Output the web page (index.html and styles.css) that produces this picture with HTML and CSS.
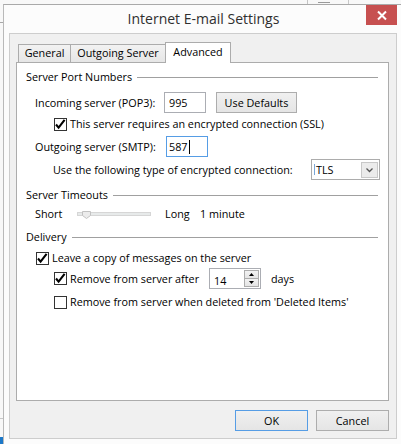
FILE: index.html
```html
<!DOCTYPE html>
<html lang="en">
<head>
<meta charset="utf-8">
<title>Internet E-mail Settings</title>
<link rel="stylesheet" href="styles.css">
</head>
<body>
<div class="deco deco-vline1"></div>
<div class="deco deco-icon"></div>
<div class="deco deco-vline2"></div>
<div class="deco deco-left1"></div>
<div class="deco deco-left2"></div>
<div class="deco deco-blue"></div>

<div class="window">
  <div class="titlebar">
    <div class="title">Internet E-mail Settings</div>
    <div class="close"><svg width="31" height="20" viewBox="0 0 31 20"><path d="M12 6.5 L20 14.5 M20 6.5 L12 14.5" stroke="#fff" stroke-width="2"/></svg></div>
  </div>
  <div class="client">
    <div class="tabs">
      <div class="tab tab-general">General</div>
      <div class="tab tab-outgoing">Outgoing Server</div>
      <div class="tab tab-active">Advanced</div>
    </div>
    <div class="panel">
      <div class="group g1"><span>Server Port Numbers</span><span class="rule"></span></div>
      <div class="row r-in">
        <span class="lbl lbl-in">Incoming server (POP3):</span>
        <span class="field f-in">995</span>
        <button class="btn btn-def">Use Defaults</button>
      </div>
      <div class="row r-ssl">
        <span class="cb cb-l2"><svg width="11" height="11" viewBox="0 0 11 11"><polyline points="1,5.5 3.6,8.6 9.6,0.8" fill="none" stroke="#000" stroke-width="2.1"/></svg></span>
        <span class="cb-lbl">This server requires an encrypted connection (SSL)</span>
      </div>
      <div class="row r-out">
        <span class="lbl lbl-out">Outgoing server (SMTP):</span>
        <span class="field f-out">587<span class="cursor"></span></span>
      </div>
      <div class="row r-enc">
        <span class="lbl lbl-enc">Use the following type of encrypted connection:</span>
        <span class="select">
          <span class="caret"></span>
          <span class="sel-text">TLS</span>
          <span class="sel-btn"><svg width="15" height="14" viewBox="0 0 15 14"><polyline points="4.5,5.5 7.5,8.5 10.5,5.5" fill="none" stroke="#555" stroke-width="1.3"/></svg></span>
        </span>
      </div>
      <div class="group g2"><span>Server Timeouts</span><span class="rule"></span></div>
      <div class="row r-time">
        <span class="lbl lbl-short">Short</span>
        <span class="slider"><span class="track"></span><svg class="thumb" width="9" height="8" viewBox="0 0 9 8"><polygon points="0.5,0.5 8.5,0.5 8.5,4.5 4.5,7.5 0.5,4.5" fill="#ececec" stroke="#c2c2c2" stroke-width="1"/></svg></span>
        <span class="lbl-long">Long</span>
        <span>1 minute</span>
      </div>
      <div class="group g3"><span>Delivery</span><span class="rule"></span></div>
      <div class="row r-leave">
        <span class="cb cb-l1"><svg width="11" height="11" viewBox="0 0 11 11"><polyline points="1,5.5 3.6,8.6 9.6,0.8" fill="none" stroke="#000" stroke-width="2.1"/></svg></span>
        <span class="cb-lbl">Leave a copy of messages on the server</span>
      </div>
      <div class="row r-after">
        <span class="cb cb-l2"><svg width="11" height="11" viewBox="0 0 11 11"><polyline points="1,5.5 3.6,8.6 9.6,0.8" fill="none" stroke="#000" stroke-width="2.1"/></svg></span>
        <span class="cb-lbl lbl-after">Remove from server after</span>
        <span class="spin">
          <span class="spin-val">14</span>
          <span class="spin-btns">
            <span class="sp sp-up"><svg width="13" height="7" viewBox="0 0 13 7"><polygon points="4,5 9,5 6.5,2" fill="#000"/></svg></span>
            <span class="sp sp-dn"><svg width="13" height="7" viewBox="0 0 13 7"><polygon points="4,2 9,2 6.5,5" fill="#000"/></svg></span>
          </span>
        </span>
        <span class="days">days</span>
      </div>
      <div class="row r-del">
        <span class="cb cb-l2"></span>
        <span class="cb-lbl">Remove from server when deleted from 'Deleted Items'</span>
      </div>
    </div>
    <div class="footer">
      <button class="btn btn-foot btn-ok">OK</button>
      <button class="btn btn-foot">Cancel</button>
    </div>
  </div>
</div>
</body>
</html>
```

FILE: styles.css
```css
* { box-sizing: border-box; }
html { background: #f8f8f8; }
body {
  margin: 0;
  padding: 4px 0 0 3px;
  width: 401px;
  height: 444px;
  overflow: hidden;
  position: relative;
  background: #f8f8f8;
  font-family: "Segoe UI", "Open Sans", sans-serif;
  font-size: 10.8px;
  line-height: 14px;
  color: #000;
}
.deco { position: absolute; }
.deco-vline1 { left: 307px; top: 0; width: 1px; height: 4px; background: #c4c4c4; }
.deco-icon { left: 318px; top: 0; width: 12px; height: 3px; border-bottom: 1px solid #9a9a9a; }
.deco-vline2 { left: 348px; top: 0; width: 1px; height: 4px; background: #c8c8c8; }
.deco-left1 { left: 0; top: 22px; width: 3px; height: 1px; background: #a8a8a8; }
.deco-left2 { left: 0; top: 418px; width: 3px; height: 1px; background: #c8c8c8; }
.deco-blue { left: 0; top: 437px; width: 3px; height: 7px; background: #1c78c8; }

.window {
  position: relative;
  width: 400px;
  height: 440px;
  background: #fcfcfc;
  border-top: 1px solid #a9a9a9;
  border-left: 1px solid #b9b9b9;
}
.titlebar { height: 28px; text-align: center; }
.title { font-size: 14px; line-height: 28px; color: #2f2f2f; }
.close {
  position: absolute;
  top: 0;
  right: 6px;
  width: 31px;
  height: 20px;
  background: #c75050;
}
.close svg { display: block; }

.client {
  margin-left: 5px;
  width: 388px;
  height: 406px;
  border: 1px solid #cdcdcd;
  background: #f0f0f0;
  padding: 8px 7px 7px 6px;
}
.tabs {
  display: flex;
  align-items: flex-end;
  height: 20px;
  padding-left: 2px;
}
.tab {
  height: 18px;
  border: 1px solid #acacac;
  border-bottom: none;
  background: linear-gradient(#f2f2f2, #e6e6e6);
  text-align: center;
  line-height: 16px;
}
.tab-general { width: 53px; }
.tab-outgoing { width: 95px; border-left: none; }
.tab-active {
  width: 66px;
  height: 21px;
  margin-left: -1px;
  margin-bottom: -1px;
  background: #fff;
  position: relative;
  z-index: 1;
  line-height: 17px;
}
.panel {
  height: 339px;
  border: 1px solid #acacac;
  background: #fff;
  padding: 0 10px 0 9px;
}
.group { display: flex; align-items: center; height: 14px; }
.group .rule { flex: 1; height: 1px; background: #a0a0a0; margin-left: 5px; }
.g1 { margin-top: 7px; }
.g2 { margin-top: 8px; }
.g3 { margin-top: 9px; }

.row { display: flex; align-items: center; height: 14px; }
.r-in { margin-top: 8px; height: 21px; }
.r-ssl { margin-top: 4px; }
.r-out { margin-top: 5px; height: 21px; }
.r-enc { margin-top: 2px; height: 21px; }
.r-time { margin-top: 5px; }
.r-leave { margin-top: 7px; }
.r-after { margin-top: 3px; height: 21px; }
.r-del { margin-top: 6px; }

.lbl { flex: none; margin-left: 9px; }
.lbl-in { width: 129px; }
.lbl-out { width: 131px; }
.lbl-enc { width: 258px; margin-left: 27px; }
.lbl-short { width: 42px; }
.lbl-long { width: 35px; margin-left: 14px; }

.field {
  flex: none;
  width: 42px;
  height: 21px;
  border: 1px solid #abadb3;
  background: #fff;
  padding-left: 4px;
  line-height: 19px;
  display: flex;
  align-items: center;
}
.f-out { border-color: #569de5; padding-left: 2px; }
.cursor { display: inline-block; width: 1px; height: 14px; background: #000; margin-left: 1px; }

.btn {
  font: inherit;
  color: #000;
  height: 21px;
  padding: 0;
  border: 1px solid #adadad;
  background: linear-gradient(#f0f0f0, #e5e5e5);
  line-height: 19px;
}
.btn-def { width: 81px; margin-left: 10px; }

.cb {
  flex: none;
  width: 13px;
  height: 13px;
  border: 1px solid #333;
  background: #fff;
}
.cb svg { display: block; overflow: visible; }
.cb-l1 { margin-left: 10px; }
.cb-l2 { margin-left: 28px; }
.cb-lbl { margin-left: 3px; }
.lbl-after { width: 139px; flex: none; }

.select {
  flex: none;
  width: 69px;
  height: 21px;
  border: 1px solid #acacac;
  background: #fff;
  display: flex;
  align-items: center;
  padding: 0 1px;
}
.caret { width: 1px; height: 11px; background: #7aa7d8; margin-left: 1px; }
.sel-text { flex: 1; padding-left: 1px; }
.sel-btn {
  width: 17px;
  height: 16px;
  border: 1px solid #c8c8c8;
  background: #ebebeb;
}
.sel-btn svg { display: block; }

.slider {
  position: relative;
  flex: none;
  width: 74px;
  height: 14px;
  display: flex;
  align-items: center;
}
.track {
  width: 74px;
  height: 4px;
  border: 1px solid #d6d6d6;
  background: #e7eaea;
}
.thumb { position: absolute; left: 5px; top: 4px; display: block; }

.spin {
  flex: none;
  width: 52px;
  height: 21px;
  border: 1px solid #abadb3;
  background: #fff;
  display: flex;
  padding: 1px 1px 1px 0;
}
.spin-val { flex: 1; padding-left: 4px; padding-top: 3px; line-height: 16px; }
.spin-btns { width: 15px; display: flex; flex-direction: column; }
.sp {
  height: 9px;
  border: 1px solid #acacac;
  background: linear-gradient(#f2f2f2, #e4e4e4);
}
.sp-dn { margin-top: -1px; height: 10px; }
.sp svg { display: block; }
.days { margin-left: 10px; }

.footer {
  display: flex;
  justify-content: flex-end;
  gap: 8px;
  margin-top: 9px;
}
.btn-foot { width: 73px; }
.btn-ok { border-color: #569de5; }
```
